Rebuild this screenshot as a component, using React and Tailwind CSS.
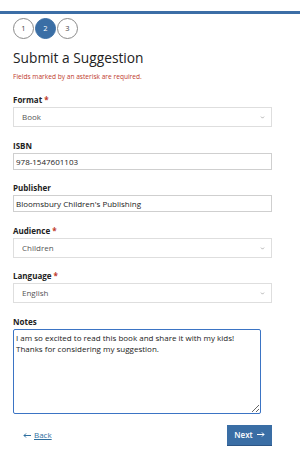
import { ChevronDown } from 'lucide-react';

const font = { fontFamily: '"Open Sans", "Noto Sans", sans-serif' };

function Label({ text, required }) {
  return (
    <label className="block text-[8px] leading-[11px] font-bold text-[#222] mb-[2px]">
      {text}
      {required && <span className="text-[#c0392b]"> *</span>}
    </label>
  );
}

function SelectField({ label, value }) {
  return (
    <div>
      <Label text={label} required />
      <div className="relative">
        <select
          defaultValue={value}
          className="block appearance-none w-full h-[20px] pl-[8px] text-[8px] text-[#555] bg-white border border-[#dedede] rounded-none outline-none"
        >
          <option>{value}</option>
        </select>
        <ChevronDown className="absolute right-[7px] top-[8px] h-[5px] w-[5px] text-[#888] pointer-events-none" strokeWidth={3} />
      </div>
    </div>
  );
}

function TextField({ label, value }) {
  return (
    <div>
      <Label text={label} />
      <input
        type="text"
        defaultValue={value}
        className="block w-full h-[17px] px-[2px] text-[8px] text-[#222] bg-white border border-[#cfcfcf] outline-none"
      />
    </div>
  );
}

function Arrow({ left }) {
  return (
    <svg width="8" height="5" viewBox="0 0 8 5" className="inline-block" fill="none" stroke="currentColor" strokeWidth="1">
      {left ? (
        <path d="M8 2.5H1M3 0.5L1 2.5L3 4.5" />
      ) : (
        <path d="M0 2.5H7M5 0.5L7 2.5L5 4.5" />
      )}
    </svg>
  );
}

export default function App() {
  const steps = [1, 2, 3];

  return (
    <div className="w-[300px] h-[473px] bg-white pt-[11px]" style={font}>
      <div className="h-[3px] bg-[#3c6ea6]" />

      <div className="px-[13px]">
        <div className="flex gap-[1px] mt-[4px]">
          {steps.map((s) => (
            <div
              key={s}
              className={`w-[21px] h-[21px] rounded-full flex items-center justify-center text-[7.5px] border ${
                s === 2
                  ? 'bg-[#3a6ea5] border-[#3a6ea5] text-white'
                  : 'bg-white border-[#8a8a8a] text-[#444]'
              }`}
            >
              {s}
            </div>
          ))}
        </div>

        <h1 className="mt-[10px] text-[13.75px] leading-[17px] text-[#222]">Submit a Suggestion</h1>
        <p className="mt-[6px] text-[6.6px] leading-[9px] text-[#c0392b]">
          Fields marked by an asterisk are required.
        </p>

        <div className="mt-[13px] w-[259px] flex flex-col gap-[12.5px]">
          <SelectField label="Format" value="Book" />
          <TextField label="ISBN" value="978-1547601103" />
          <TextField label="Publisher" value="Bloomsbury Children's Publishing" />
          <SelectField label="Audience" value="Children" />
          <SelectField label="Language" value="English" />
          <div>
            <Label text="Notes" />
            <textarea
              defaultValue={'I am so excited to read this book and share it with my kids!\nThanks for considering my suggestion.'}
              className="block w-[248px] h-[85px] px-[2px] py-[2px] text-[8px] leading-[11px] text-[#222] bg-white border-[1.5px] border-[#3b74c4] rounded-[2px] outline-none"
            />
          </div>
        </div>

        <div className="mt-[11px] w-[259px] flex items-center justify-between">
          <a href="#" className="ml-[10px] flex items-center gap-[3px] text-[8px] text-[#2f6f9f]">
            <Arrow left />
            <span className="underline">Back</span>
          </a>
          <button className="h-[21px] w-[45px] flex items-center justify-center gap-[4px] bg-[#3a6ea5] border-b border-[#2c5585] text-white text-[8px] font-semibold">
            Next
            <Arrow />
          </button>
        </div>
      </div>
    </div>
  );
}
